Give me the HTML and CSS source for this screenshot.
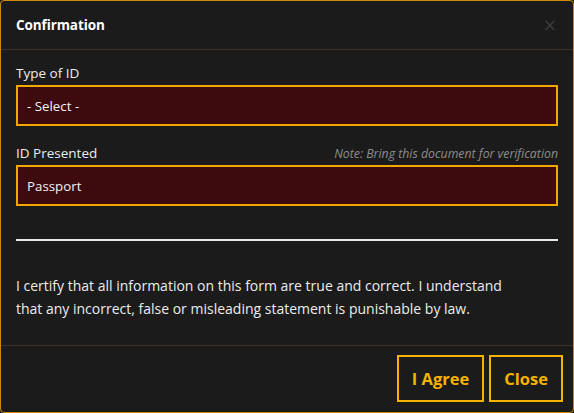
FILE: index.html
```html
<!DOCTYPE html>
<html lang="en">
<head>
    <meta charset="UTF-8">
    <meta name="viewport" content="width=device-width, initial-scale=1.0">
    <title>Confirmation</title>
    <link rel="stylesheet" href="styles.css">
</head>
<body>
    <div class="modal">
        <div class="modal-header">
            <h2>Confirmation</h2>
            <button class="close-x" aria-label="Close">&times;</button>
        </div>
        <div class="modal-body">
            <div class="field">
                <label for="idType">Type of ID</label>
                <div class="input-box" id="idType">- Select -</div>
            </div>
            <div class="field">
                <div class="label-row">
                    <label for="idPresented">ID Presented</label>
                    <span class="note">Note: Bring this document for verification</span>
                </div>
                <div class="input-box" id="idPresented">Passport</div>
            </div>
            <hr>
            <p class="certify">I certify that all information on this form are true and correct. I understand that any incorrect, false or misleading statement is punishable by law.</p>
        </div>
        <div class="modal-footer">
            <button class="btn">I Agree</button>
            <button class="btn">Close</button>
        </div>
    </div>
</body>
</html>
```

FILE: styles.css
```css
html, body {
    margin: 0;
    height: 100%;
    background-color: #1b1b1b;
}
body {
    font-family: "Open Sans", "Noto Sans", sans-serif;
    color: #ececec;
}
.modal {
    box-sizing: border-box;
    height: 100%;
    display: flex;
    flex-direction: column;
    border: 1px solid #c88a0a;
    border-radius: 4px;
    background-color: #1b1b1b;
}
.modal-header {
    height: 48px;
    display: flex;
    align-items: center;
    justify-content: space-between;
    padding: 0 15px;
    border-bottom: 1px solid #3b3222;
}
.modal-header h2 {
    margin: 0;
    font-size: 13.5px;
    font-weight: 700;
    letter-spacing: -0.1px;
    color: #fff;
}
.close-x {
    background: none;
    border: none;
    padding: 0 1px 0 0;
    font-family: "DejaVu Sans", sans-serif;
    font-size: 17px;
    color: #3a3a3a;
    cursor: pointer;
}
.modal-body {
    flex: 1;
    padding: 13px 15px 0;
}
.field {
    margin-bottom: 17px;
}
.field label {
    display: block;
    font-size: 13.5px;
    line-height: 20px;
    margin-bottom: 2px;
}
.label-row {
    display: flex;
    justify-content: space-between;
    align-items: baseline;
}
.note {
    font-size: 12.3px;
    font-style: italic;
    color: #8d8d8d;
}
.input-box {
    box-sizing: border-box;
    height: 41px;
    display: flex;
    align-items: center;
    padding: 0 9px;
    border: 2px solid #f1a800;
    background-color: #3d0b0d;
    font-size: 13.3px;
    color: #f2f2f2;
}
hr {
    margin: 33px 0 0;
    border: none;
    border-top: 2px solid #e8e8e8;
}
.certify {
    margin: 33px 0 0;
    padding-right: 28px;
    font-size: 14px;
    line-height: 23px;
}
.modal-footer {
    display: flex;
    justify-content: flex-end;
    gap: 5px;
    padding: 9px 10px 10px;
    border-top: 1px solid #3b3222;
}
.btn {
    height: 47px;
    padding: 0 13px;
    background: none;
    border: 2px solid #f5b300;
    font-family: "Open Sans", sans-serif;
    font-size: 16.5px;
    font-weight: 700;
    color: #f5b300;
    cursor: pointer;
}
```
